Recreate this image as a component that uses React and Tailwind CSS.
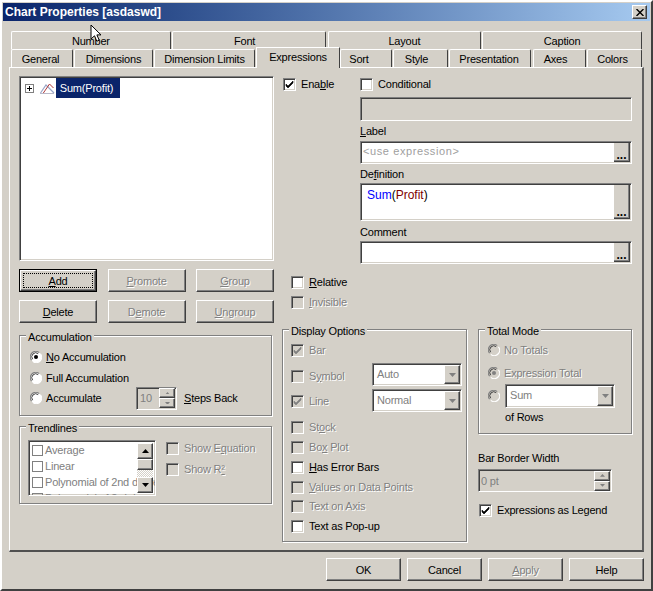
import React from "react";

const sunken =
  "border border-t-[#808080] border-l-[#808080] border-r-white border-b-white shadow-[inset_1px_1px_0_#404040,inset_-1px_-1px_0_#d4d0c8]";
const raised =
  "border border-t-white border-l-white border-r-[#404040] border-b-[#404040] shadow-[inset_-1px_-1px_0_#808080] bg-[#d4d0c8]";
const off = "text-[#808080] [text-shadow:1px_1px_0_#fff]";

function Check({ checked, disabled, label, className = "" }) {
  return (
    <div className={"flex items-center h-5 whitespace-nowrap " + className}>
      <span className={"relative w-[13px] h-[13px] shrink-0 " + sunken + (disabled ? " bg-[#d4d0c8]" : " bg-white")}>
        {checked && (
          <svg viewBox="0 0 11 11" className="w-[11px] h-[11px]">
            <path d="M2 5l2 2 5-5v2l-5 5-2-2z" fill={disabled ? "#808080" : "#000"} stroke={disabled ? "#808080" : "#000"} strokeWidth="0.6" />
          </svg>
        )}
      </span>
      <span className={"ml-[5px] " + (disabled ? off : "text-black")}>{label}</span>
    </div>
  );
}

function Radio({ checked, disabled, label, className = "" }) {
  return (
    <div className={"flex items-center h-5 whitespace-nowrap " + className}>
      <svg viewBox="0 0 12 12" className="w-3 h-3 shrink-0">
        <circle cx="6" cy="6" r="5.5" fill={disabled ? "#d4d0c8" : "#fff"} />
        <path d="M1.6 9.2A5.4 5.4 0 0 1 9.2 1.6" fill="none" stroke="#808080" strokeWidth="1.2" />
        <path d="M2.6 8.2A4 4 0 0 1 8.2 2.6" fill="none" stroke="#404040" strokeWidth="1" />
        <path d="M10.4 2.8A5.4 5.4 0 0 1 2.8 10.4" fill="none" stroke="#fff" strokeWidth="1.2" />
        {checked && <circle cx="6" cy="6" r="2" fill={disabled ? "#808080" : "#000"} />}
      </svg>
      {label && <span className={"ml-1 " + (disabled ? off : "text-black")}>{label}</span>}
    </div>
  );
}

function Btn({ children, disabled, isDefault, className = "" }) {
  return (
    <div className={"h-[23px] flex items-center justify-center " + (isDefault ? "border border-black " : "") + className}>
      <div className={"w-full h-full flex items-center justify-center " + raised + (disabled ? " " + off : " text-black")}>
        {isDefault ? (
          <div className="w-[70px] h-[15px] flex items-center justify-center border border-dotted border-black">{children}</div>
        ) : (
          children
        )}
      </div>
    </div>
  );
}

function Group({ title, className = "", children }) {
  return (
    <div className={"relative border border-[#808080] shadow-[1px_1px_0_#fff,inset_1px_1px_0_#fff] " + className}>
      <span className="absolute -top-[6px] left-[6px] px-[2px] bg-[#d4d0c8] leading-[14px] text-black">{title}</span>
      {children}
    </div>
  );
}

function Dots({ className = "" }) {
  return (
    <div className={"w-[16px] flex items-end justify-center pb-[2px] border-r border-b border-r-[#404040] border-b-[#404040] bg-[#d4d0c8] shadow-[inset_-1px_-1px_0_#808080] font-bold leading-[8px] tracking-normal text-[12px] text-black " + className}>
      ...
    </div>
  );
}

function Arrow({ up, color = "#000", size = 7 }) {
  return (
    <svg viewBox="0 0 7 4" width={size} height={(size * 4) / 7}>
      <path d={up ? "M0 4h7L3.5 0z" : "M0 0h7L3.5 4z"} fill={color} />
    </svg>
  );
}

function Combo({ value, className = "" }) {
  return (
    <div className={"h-[23px] flex bg-white " + sunken + " " + className}>
      <span className="flex-1 pl-[4px] pt-[3px] text-[#808080]">{value}</span>
      <div className={"w-[16px] m-[1px] flex items-center justify-center " + raised}>
        <Arrow color="#808080" />
      </div>
    </div>
  );
}

function Spin({ className = "" }) {
  return (
    <div className={"flex flex-col w-[16px] h-[20px] " + className}>
      <div className={"h-[10px] flex items-center justify-center " + raised}>
        <Arrow up color="#808080" size={5} />
      </div>
      <div className={"h-[10px] flex items-center justify-center " + raised}>
        <Arrow color="#808080" size={5} />
      </div>
    </div>
  );
}

function Tab({ label, className = "" }) {
  return (
    <div className={"h-[18px] flex items-center justify-center border-t border-l border-r border-t-white border-l-white border-r-[#404040] rounded-t-[2px] text-black " + className}>
      {label}
    </div>
  );
}

function ListRow({ label }) {
  return (
    <div className="flex items-center h-4 shrink-0">
      <span className="w-[11px] h-[11px] mx-[1px] border border-[#808080] shrink-0" />
      <span className="ml-[1px] text-[#808080] whitespace-nowrap">{label}</span>
    </div>
  );
}

export default function App() {
  return (
    <div className="relative w-[653px] h-[591px] overflow-hidden bg-[#d4d0c8] border-t-2 border-l-2 border-r-2 border-b-2 border-t-white border-l-white border-r-[#404040] border-b-[#404040] text-[11px] tracking-[-0.2px] leading-[14px] font-['Liberation_Sans',sans-serif] p-px">
      {/* title bar */}
      <div className="h-[18px] w-[647px] flex items-center justify-between pl-[2px] pr-[3px] bg-gradient-to-r from-[#0a246a] to-[#a6caf0]">
        <span className="font-bold text-white text-[12px] tracking-normal">Chart Properties [asdaswd]</span>
        <div className={"w-[15px] h-[14px] flex items-center justify-center " + raised}>
          <svg viewBox="0 0 8 7" className="w-2 h-[7px]">
            <path d="M0.5 0l7 7M7.5 0l-7 7" stroke="#000" strokeWidth="1.4" />
          </svg>
        </div>
      </div>

      {/* tabs */}
      <div className="flex ml-[8px] mt-[10px] w-[631px]">
        <Tab label="Number" className="w-[160px]" />
        <Tab label="Font" className="w-[154px] ml-px pr-[8px]" />
        <Tab label="Layout" className="w-[154px] ml-[2px]" />
        <Tab label="Caption" className="w-[160px] ml-px" />
      </div>
      <div className="relative z-10 flex items-end ml-[8px] w-[631px] h-[18px]">
        <Tab label="General" className="w-[62px] pr-[3px]" />
        <Tab label="Dimensions" className="w-[79px] ml-px" />
        <Tab label="Dimension Limits" className="w-[101px] ml-px" />
        <div className="w-[84px] h-[21px] mb-[-1px] ml-px pb-[3px] flex items-center justify-center bg-[#d4d0c8] border-t border-l border-r border-t-white border-l-white border-r-[#404040] text-black">
          Expressions
        </div>
        <Tab label="Sort" className="w-[52px] pr-[14px]" />
        <Tab label="Style" className="w-[55px] ml-px pr-[8px]" />
        <Tab label="Presentation" className="w-[82px] ml-px pr-[2px]" />
        <Tab label="Axes" className="w-[53px] ml-[2px] pr-[8px]" />
        <Tab label="Colors" className="w-[55px] ml-px pr-[4px]" />
      </div>

      {/* panel */}
      <div className="flex w-[635px] h-[485px] ml-[6px] border-t border-l border-r-2 border-b-2 border-t-white border-l-white border-r-[#606060] border-b-[#505050] pt-[8px] pl-[9px]">
        {/* left column */}
        <div className="w-[255px] shrink-0">
          <div className={"h-[185px] bg-white p-[2px] pt-[1px] " + sunken}>
            <div className="flex items-center h-5">
              <span className="w-[9px] h-[9px] ml-[3px] flex items-center justify-center border border-[#808080] text-black">
                <svg viewBox="0 0 7 7" className="w-[7px] h-[7px]">
                  <path d="M1 3.5h5M3.5 1v5" stroke="#000" strokeWidth="1" />
                </svg>
              </span>
              <svg viewBox="0 0 15 11" className="w-[15px] h-[11px] ml-[6px]">
                <path d="M0.5 10L6 2l8 8" fill="none" stroke="#9aa6c8" strokeWidth="1.2" />
                <path d="M3 10.5L9.5 1l4 4" fill="none" stroke="#b03a3a" strokeWidth="1" />
                <path d="M0 10.5h14" stroke="#b8b8c8" />
              </svg>
              <span className="ml-px h-5 w-[64px] pr-[3px] flex items-center justify-center bg-[#0a246a] text-white">Sum(Profit)</span>
            </div>
          </div>

          <div className="grid grid-cols-[78px_78px_78px] gap-x-[10.5px] gap-y-[8px] mt-[8px]">
            <Btn isDefault><span><u>A</u>dd</span></Btn>
            <Btn disabled><span><u>P</u>romote</span></Btn>
            <Btn disabled><span><u>G</u>roup</span></Btn>
            <Btn><span><u>D</u>elete</span></Btn>
            <Btn disabled><span>D<u>e</u>mote</span></Btn>
            <Btn disabled><span><u>U</u>ngroup</span></Btn>
          </div>

          <Group title="Accumulation" className="w-[253px] h-[81px] mt-[12px] pl-[10px] pt-[11px]">
            <Radio checked label={<span><u>N</u>o Accumulation</span>} />
            <Radio label="Full Accumulation" className="mt-px" />
            <div className="flex items-center h-5">
              <Radio label="Accumulate" className="w-[106px]" />
              <div className={"w-[41px] h-[23px] flex items-center justify-between pl-[3px] pr-px " + sunken}>
                <span className="text-[#808080]">10</span>
                <Spin />
              </div>
              <span className="ml-[7px] text-black"><u>S</u>teps Back</span>
            </div>
          </Group>

          <Group title="Trendlines" className="w-[253px] h-[78px] mt-[10px] flex pl-[8px] pt-[13px]">
            <div className={"relative w-[128px] h-[56px] overflow-hidden flex flex-col bg-white p-[2px] pt-[1px] pr-[18px] " + sunken}>
              <ListRow label="Average" />
              <ListRow label="Linear" />
              <ListRow label="Polynomial of 2nd degree" />
              <ListRow label="Polynomial of 3rd degree" />
              <div className="absolute right-[2px] top-[2px] bottom-[2px] w-4 flex flex-col bg-[repeating-conic-gradient(#d4d0c8_0_25%,#fff_0_50%)] bg-[length:2px_2px]">
                <div className={"h-4 flex items-center justify-center " + raised}><Arrow up /></div>
                <div className={"h-[11px] " + raised} />
                <div className="flex-1" />
                <div className={"h-4 flex items-center justify-center " + raised}><Arrow /></div>
              </div>
            </div>
            <div className="ml-[10px] -mt-[2px]">
              <Check disabled label={<span>Show E<u>q</u>uation</span>} />
              <Check disabled label={<span>Show R<u>²</u></span>} className="mt-px" />
            </div>
          </Group>
        </div>

        {/* right part */}
        <div className="ml-[8px] w-[351px]">
          <div className="flex">
            <Check checked label={<span>Ena<u>b</u>le</span>} className="w-[77px] ml-px -mt-[2px]" />
            <div className="w-[272px]">
              <Check label="Conditional" className="-mt-[2px]" />
              <div className={"h-[24px] mt-[3px] " + sunken} />
              <div className="mt-px h-[19px] text-black leading-[18px]"><u>L</u>abel</div>
              <div className={"h-[23px] flex justify-between bg-white p-[1px] " + sunken}>
                <span className="pl-[1px] pt-[1px] text-[#a0a0a0] tracking-[0.6px]">&lt;use expression&gt;</span>
                <Dots />
              </div>
              <div className="mt-[3px] h-[16px] text-black">De<u>f</u>inition</div>
              <div className={"h-[38px] flex justify-between bg-white p-[1px] " + sunken}>
                <span className="pl-[5px] pt-[3px] text-[12px] tracking-normal">
                  <span className="text-[#0000ff]">Sum</span>
                  <span className="text-black">(</span>
                  <span className="text-[#800000]">Profit</span>
                  <span className="text-black">)</span>
                </span>
                <Dots />
              </div>
              <div className="mt-[4px] h-[16px] text-black">Comment</div>
              <div className={"h-[23px] flex justify-end bg-white p-[1px] " + sunken}>
                <Dots />
              </div>
            </div>
          </div>

          <div className="ml-[9px] mt-[8px]">
            <Check label={<span><u>R</u>elative</span>} />
            <Check disabled label={<span><u>I</u>nvisible</span>} />
          </div>

          <div className="flex mt-[17px]">
            <Group title="Display Options" className="w-[185px] h-[213px] pl-[8px] pt-[10px]">
              <Check checked disabled label="Bar" />
              <div className="flex items-center h-5 mt-[6px]">
                <Check disabled label={<span>S<u>y</u>mbol</span>} className="w-[81px]" />
                <Combo value="Auto" className="w-[90px] -mt-[3px]" />
              </div>
              <div className="flex items-center h-5 mt-[5px]">
                <Check checked disabled label="Line" className="w-[81px]" />
                <Combo value="Normal" className="w-[90px] -mt-px" />
              </div>
              <Check disabled label={<span>St<u>o</u>ck</span>} className="mt-[6px]" />
              <Check disabled label={<span>Bo<u>x</u> Plot</span>} />
              <Check label={<span><u>H</u>as Error Bars</span>} />
              <Check disabled label={<span><u>V</u>alues on Data Points</span>} />
              <Check disabled label="Text on Axis" className="-mt-px" />
              <Check label="Text as Pop-up" />
            </Group>

            <div className="ml-[11px] w-[154px]">
              <Group title="Total Mode" className="h-[105px] pl-[9px] pt-[10px]">
                <Radio disabled label="No Totals" />
                <Radio checked disabled label="Expression Total" className="mt-[3px]" />
                <div className="flex items-center h-[24px] mt-px">
                  <Radio disabled />
                  <Combo value="Sum" className="w-[110px] ml-[5px] !h-[24px]" />
                </div>
                <div className="ml-[17px] text-black leading-[18px]">of Rows</div>
              </Group>

              <div className="mt-[17px] h-[18px] text-black">Bar Border Width</div>
              <div className={"w-[134px] h-[23px] flex items-center justify-between pl-[2px] pr-px " + sunken}>
                <span className="text-[#808080]">0 pt</span>
                <Spin />
              </div>
              <Check checked label="Expressions as Legend" className="mt-[8px] ml-px" />
            </div>
          </div>
        </div>
      </div>

      {/* bottom buttons */}
      <div className="flex justify-end w-[641px] mt-[6px] gap-[6px]">
        <Btn className="w-[75px]">OK</Btn>
        <Btn className="w-[75px]">Cancel</Btn>
        <Btn disabled className="w-[75px]"><span><u>A</u>pply</span></Btn>
        <Btn className="w-[75px]">Help</Btn>
      </div>

      {/* mouse pointer from the capture */}
      <svg viewBox="0 0 12 19" className="absolute left-[88px] top-[22px] w-3 h-[19px]">
        <path d="M1 1v14l3.5-3.2 2.3 5.4 2.4-1-2.3-5.3H11z" fill="#fff" stroke="#000" strokeWidth="1" />
      </svg>
    </div>
  );
}
